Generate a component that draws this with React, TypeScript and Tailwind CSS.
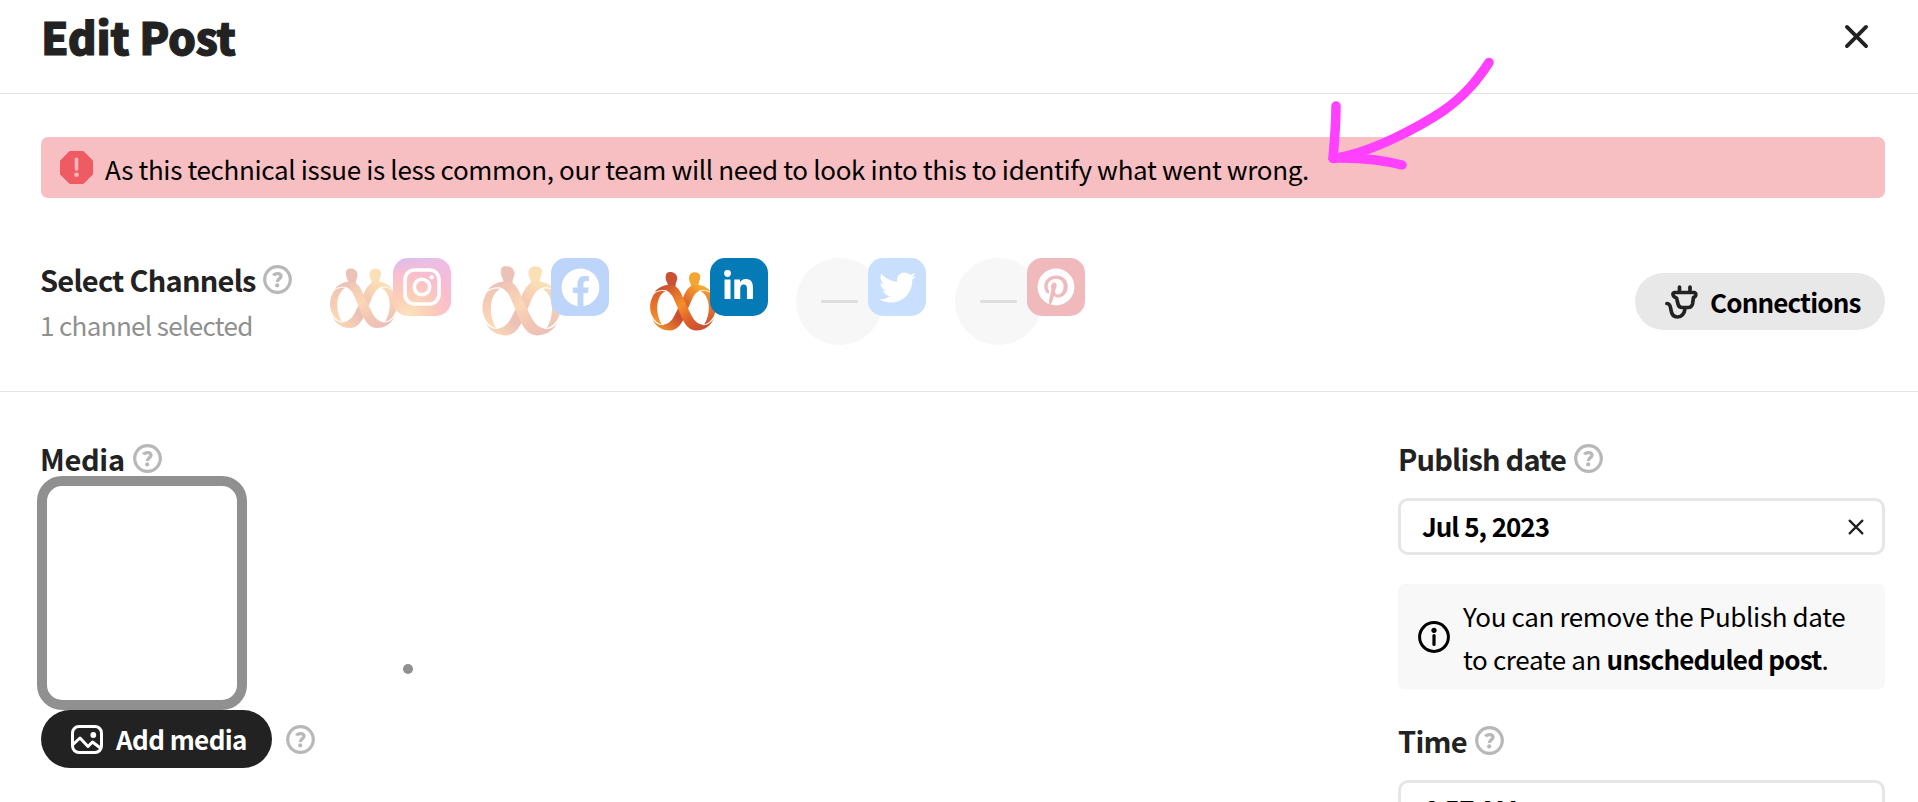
import type { ReactNode } from "react";
import { FaFacebook, FaLinkedinIn, FaPinterest, FaTwitter } from "react-icons/fa";

const heading = "text-[29px] font-bold text-[#222222]";

function HelpIcon() {
  return (
    <svg viewBox="0 0 29 29" className="size-[29px] shrink-0" fill="none" stroke="#b8b8b8">
      <circle cx="14.5" cy="14.5" r="12.8" strokeWidth="3.2" />
      <path d="M10.5 10.5C12 8 18 7.6 18 11.2C18 13.8 14.4 13.5 14.4 16.9" strokeWidth="3.3" />
      <circle cx="14.2" cy="20.4" r="2.1" fill="#b8b8b8" stroke="none" />
    </svg>
  );
}

function CloseIcon({ className, width }: { className: string; width: number }) {
  return (
    <svg viewBox="0 0 24 24" className={className} fill="none" stroke="#222222" strokeWidth={width} strokeLinecap="round">
      <path d="M3.5 3.5L20.5 20.5M20.5 3.5L3.5 20.5" />
    </svg>
  );
}

/** Brand mark: two figures whose bodies form an infinity ribbon. */
function BrandMark({ id, className }: { id: string; className: string }) {
  return (
    <svg viewBox="0 0 68 60" className={className} fill="none">
      <defs>
        <linearGradient id={`${id}-down`} gradientUnits="userSpaceOnUse" x1="16" y1="14" x2="50" y2="58">
          <stop offset="0" stopColor="#cf5230" />
          <stop offset="0.45" stopColor="#f58f2c" />
          <stop offset="0.75" stopColor="#dd5f2c" />
          <stop offset="1" stopColor="#cc4f30" />
        </linearGradient>
        <linearGradient id={`${id}-up`} gradientUnits="userSpaceOnUse" x1="48" y1="14" x2="12" y2="58">
          <stop offset="0" stopColor="#f6a52f" />
          <stop offset="0.35" stopColor="#e0672b" />
          <stop offset="0.65" stopColor="#c84c31" />
          <stop offset="1" stopColor="#f08a2b" />
        </linearGradient>
        <linearGradient id={`${id}-left`} gradientUnits="userSpaceOnUse" x1="0" y1="14" x2="0" y2="56">
          <stop offset="0" stopColor="#d4592e" />
          <stop offset="0.5" stopColor="#e8732a" />
          <stop offset="1" stopColor="#f6a22e" />
        </linearGradient>
        <linearGradient id={`${id}-right`} gradientUnits="userSpaceOnUse" x1="0" y1="14" x2="0" y2="56">
          <stop offset="0" stopColor="#f6a22e" />
          <stop offset="1" stopColor="#cc4f30" />
        </linearGradient>
      </defs>
      <path d="M18 0.5C23 -1 28 2 27.500 7C27.300 10 25.500 11 26 15L18 15C19 12 16.400 10 16 7C15.600 4 16 1.500 18 0.500Z" fill="#ca5133" />
      <path d="M41 2C43 -0.500 49 -0.500 50.800 3C52 6.500 49 10 49 15L41.500 15C42 11.500 39.800 10.500 39.600 7C39.500 5 40 3.300 41 2Z" fill="#f6a530" />
      {/* outer sides */}
      <path d="M8 18C1 24 -1.500 34 1 42C3 48 7 52 12 53.500C8 47 6 38 8 30C9.500 24 13 20 17 19Z" fill={`url(#${id}-left)`} />
      <path d="M59 18C66 24 68.500 34 66 42C64 48 60 52 55 53.500C59 47 61 38 59 30C57.500 24 54 20 50 19Z" fill={`url(#${id}-right)`} />
      {/* crossing ribbons */}
      <path d="M63 21C59 16 53 13 47 13C40 13 37 18 34 25C31 32 28 38 25 44C22 50 18 53 14 53.500C9 54 5 51 2 47C5 55 12 59.500 20 59.500C27 59.500 31 54 34 48C37 41 40 34 43 27C45 22.500 48 19.500 51 18.800C56 18 60 18.500 63 21Z" fill={`url(#${id}-up)`} />
      <path d="M4 21C8 16 14 13 20 13C27 13 30 18 33 25C36 32 39 38 42 44C45 50 49 53 53 53.500C58 54 62 51 65 47C62 55 55 59.500 47 59.500C40 59.500 36 54 33 48C30 41 27 34 24 27C22 22.500 19 19.500 16 18.800C11 18 7 18.500 4 21Z" fill={`url(#${id}-down)`} />
      <path d="M3 22.500C7 19 12 18 17 19.300M2.500 47.500C5 51.500 9 54 14 53.500M50 19.300C55 18 60 19 64 22.500M53 53.500C58 54 62 51.500 64.500 47.500" stroke="white" strokeWidth="1" />
    </svg>
  );
}

function InstagramGlyph() {
  return (
    <svg viewBox="0 0 38 38" className="size-[38px]" fill="none" stroke="white" strokeWidth="3.600">
      <rect x="2" y="2" width="34" height="34" rx="9.500" />
      <circle cx="19" cy="19" r="7.700" />
      <circle cx="28.700" cy="9.300" r="2.200" fill="white" stroke="none" />
    </svg>
  );
}

function Channel({ avatar, badge, badgeClass }: { avatar: ReactNode; badge: ReactNode; badgeClass: string }) {
  return (
    <div className="relative h-[88px] w-[130px]">
      {avatar}
      <div className={`absolute top-0 right-0 flex size-[58px] items-center justify-center overflow-hidden rounded-[15px] text-white ${badgeClass}`}>
        {badge}
      </div>
    </div>
  );
}

function EmptyAvatar() {
  return (
    <div className="flex size-[87px] items-center justify-center rounded-full bg-[#f7f7f7]">
      <div className="h-[3px] w-[37px] rounded-full bg-[#dedede]" />
    </div>
  );
}

function Label({ children, tracking }: { children: ReactNode; tracking: string }) {
  return (
    <div className="flex h-9 items-center gap-2">
      <span className={`mt-[2px] ${heading} ${tracking}`}>{children}</span>
      <div className="mt-px">
        <HelpIcon />
      </div>
    </div>
  );
}

export default function App() {
  return (
    <div className="relative h-[802px] w-[1918px] overflow-hidden bg-white font-['Noto_Sans_CJK_SC',sans-serif] whitespace-nowrap text-black">
      <header className="flex h-[94px] items-center justify-between border-b border-[#e3e3e3] pr-[48px] pb-[21px] pl-[41px]">
        <h1 className="text-[44px] leading-[60px] font-black tracking-[-0.35px] text-[#222222] [-webkit-text-stroke:1px_#222222]">Edit Post</h1>
        <button><CloseIcon className="size-[27px]" width={3.4} /></button>
      </header>

      <div className="mt-[43px] mr-[33px] ml-[41px] flex h-[61px] items-center rounded-[7px] bg-[#f7bfc2] pl-[19px]">
        <svg viewBox="0 0 33 33" className="size-[33px]">
          <path d="M9.700 0.500H23.300L32.500 9.700V23.300L23.300 32.500H9.700L0.500 23.300V9.700Z" fill="#ee5b62" stroke="#ee5b62" strokeLinejoin="round" />
          <path d="M16.500 8.200V18" stroke="#f9b8bb" strokeWidth="3.600" strokeLinecap="round" />
          <circle cx="16.500" cy="23.800" r="2.300" fill="#f9b8bb" />
        </svg>
        <p className="mt-[2px] ml-3 text-[26px] tracking-[-0.34px]">
          As this technical issue is less common, our team will need to look into this to identify what went wrong.
        </p>
      </div>

      <section className="flex h-[194px] items-start border-b border-[#e3e3e3] pt-[59px] pr-[33px] pl-[40px]">
        <div className="w-[281px]">
          <div className="flex h-[45px] items-center gap-[7px]">
            <span className={`${heading} tracking-[-0.75px]`}>Select Channels</span>
            <HelpIcon />
          </div>
          <p className="text-[26px] leading-[45px] tracking-[-0.65px] text-[#909090]">1 channel selected</p>
        </div>
        <div className="mt-px flex gap-[28.4px]">
          <Channel
            avatar={<BrandMark id="ig" className="mt-[10px] ml-[9px] h-[61px] w-[68px] opacity-35" />}
            badge={<InstagramGlyph />}
            badgeClass="bg-[radial-gradient(circle_at_28%_100%,#fde3bb_0%,#fcccb9_32%,#f9bdd0_62%,transparent_85%),linear-gradient(90deg,#cbc0fb,#f5bcdf)]"
          />
          <Channel
            avatar={<BrandMark id="fb" className="mt-[8px] ml-[3px] h-[70px] w-[80px] opacity-35" />}
            badge={<FaFacebook className="size-[39px]" />}
            badgeClass="bg-[#bdd5fb]"
          />
          <Channel
            avatar={<BrandMark id="li" className="mt-[14px] ml-[12px] h-[59px] w-[67px]" />}
            badge={<FaLinkedinIn className="-mt-[2px] size-[33px]" />}
            badgeClass="bg-[#047ab7]"
          />
          <Channel avatar={<EmptyAvatar />} badge={<FaTwitter className="size-[37px]" />} badgeClass="bg-[#c8e0fe]" />
          <Channel avatar={<EmptyAvatar />} badge={<FaPinterest className="size-[38px]" />} badgeClass="bg-[#f0b9bc]" />
        </div>
        <button className="mt-4 ml-auto flex h-[57px] w-[250px] items-center rounded-full bg-[#e8e8e8] pl-[30px]">
          <svg viewBox="0 0 33 34" className="h-[34px] w-[33px]" fill="none" stroke="#222222" strokeWidth="3.700" strokeLinecap="round" strokeLinejoin="round">
            <path d="M14.500 2V7M25 2V7M9.500 7.500H29C31.500 7.500 31.500 11.500 28.500 12.500L27.500 19C27 21.500 25.500 22.500 23 22.500H17C14.500 22.500 13.500 21 13 19L11.500 13C7.500 12 7 7.500 9.500 7.500Z" />
            <path d="M20 23.500C19.500 29 16.500 32 12.500 32C8 32 6.500 29 6 25C5.500 20.500 4.500 18.500 1.900 18.500" />
          </svg>
          <span className="ml-[12px] text-[26px] font-bold tracking-[-0.85px]">Connections</span>
        </button>
      </section>

      <main className="flex justify-between pt-[48px] pr-[33px] pl-[41px]">
        <div>
          <div className="-ml-px">
            <Label tracking="tracking-[-0.3px]">Media</Label>
          </div>
          <div className="-ml-1 h-[234px] w-[210px] rounded-[25px] border-[10px] border-[#909090]" />
          <div className="flex items-center gap-[14px]">
            <button className="flex h-[58px] w-[231px] items-center rounded-full bg-[#222222] pl-[30px] text-white">
              <svg viewBox="0 0 32 29" className="h-[29px] w-[32px]" fill="none" stroke="white" strokeWidth="3" strokeLinejoin="round">
                <rect x="1.500" y="1.500" width="29" height="26" rx="6.500" />
                <path d="M2 19.500L9 13L17 21.500L21.500 17L30 23.500" />
                <circle cx="22.300" cy="10" r="2.900" fill="white" stroke="none" />
              </svg>
              <span className="-mt-[2px] ml-[13px] text-[26px] font-bold tracking-[-0.6px]">Add media</span>
            </button>
            <HelpIcon />
          </div>
        </div>

        <div className="w-[487px]">
          <Label tracking="tracking-[-0.8px]">Publish date</Label>
          <div className="mt-[22px] flex h-[57px] items-center justify-between rounded-[10px] border-[3px] border-[#e6e6e6] pr-[17px] pl-[21px]">
            <span className="-mt-[2px] text-[26px] font-bold tracking-[-1.05px] [word-spacing:1px]">Jul 5, 2023</span>
            <CloseIcon className="size-[18px]" width={3} />
          </div>
          <div className="mt-[29px] flex h-[105px] items-center rounded-[6px] bg-[#f8f8f8] pl-5">
            <svg viewBox="0 0 32 32" className="size-8" fill="none" stroke="black" strokeWidth="3">
              <circle cx="16" cy="16" r="14.400" />
              <path d="M16 14.500V23.500" strokeWidth="3.200" strokeLinecap="round" />
              <circle cx="16" cy="9.300" r="2.600" fill="black" stroke="none" />
            </svg>
            <p className="ml-[13px] text-[26px] leading-[43px] tracking-[-0.36px]">
              You can remove the Publish date
              <br />
              to create an <b className="font-bold tracking-[-0.75px]">unscheduled post</b>.
            </p>
          </div>
          <div className="mt-[33px]">
            <Label tracking="tracking-[-0.75px]">Time</Label>
          </div>
          <div className="mt-[22px] flex h-[57px] items-center rounded-[10px] border-[3px] border-[#e6e6e6] pl-[21px]">
            <span className="text-[26px] font-bold tracking-[-0.6px]">4:57 AM</span>
          </div>
        </div>
      </main>

      <span className="absolute top-[664px] left-[403px] size-[10px] rounded-full bg-[#909090]" />

      {/* hand-drawn arrow over the banner */}
      <svg viewBox="0 0 180 130" className="absolute top-[50px] left-[1320px] h-[130px] w-[180px]" fill="none" stroke="#ff40ff" strokeWidth="9.500" strokeLinecap="round" strokeLinejoin="round">
        <path d="M169 12.500C158 29 146 45 123 61C102 75 52 103 13 108.500" />
        <path d="M16 56C16 75 14.500 91 13 108C36 107.500 60 109 82 115" />
      </svg>
    </div>
  );
}
